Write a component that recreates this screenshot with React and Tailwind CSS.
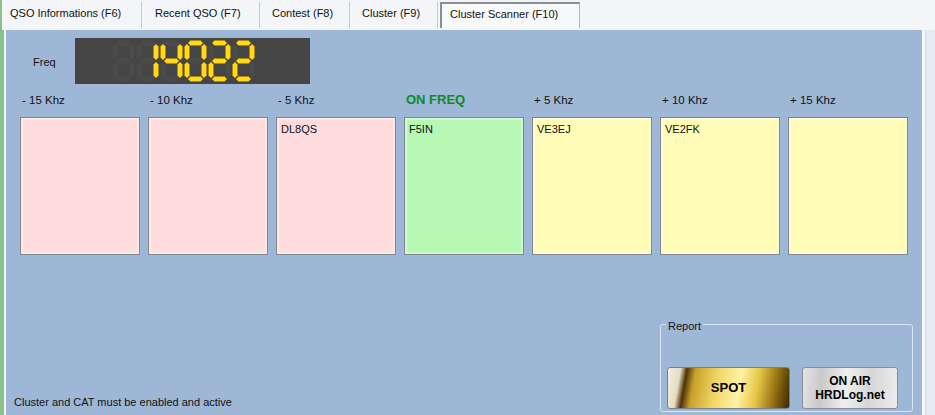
import React from "react";

const SEGS = {
  "0": "abcdef",
  "1": "bc",
  "2": "abged",
  "3": "abgcd",
  "4": "fgbc",
  "5": "afgcd",
  "6": "afgedc",
  "7": "abc",
  "8": "abcdefg",
  "9": "abcdfg",
};

function hseg(x1, x2, cy, t) {
  const h = t / 2;
  return `${x1},${cy} ${x1 + h},${cy - h} ${x2 - h},${cy - h} ${x2},${cy} ${x2 - h},${cy + h} ${x1 + h},${cy + h}`;
}
function vseg(y1, y2, cx, t) {
  const h = t / 2;
  return `${cx},${y1} ${cx + h},${y1 + h} ${cx + h},${y2 - h} ${cx},${y2} ${cx - h},${y2 - h} ${cx - h},${y1 + h}`;
}

function Digit({ d, ghost }) {
  const w = 23;
  const h = 42;
  const t = 5;
  const L = 3;
  const R = w - 3;
  const T = 3;
  const M = h / 2;
  const B = h - 3;
  const geo = {
    a: hseg(L + 1, R - 1, T, t),
    b: vseg(T + 1, M - 1, R, t),
    c: vseg(M + 1, B - 1, R, t),
    d: hseg(L + 1, R - 1, B, t),
    e: vseg(M + 1, B - 1, L, t),
    f: vseg(T + 1, M - 1, L, t),
    g: hseg(L + 1, R - 1, M, t),
  };
  const on = ghost ? "" : SEGS[d] || "";
  return (
    <svg width="24" height="42" viewBox="0 0 24 42" aria-hidden="true">
      {Object.keys(geo).map((k) => (
        <polygon
          key={k}
          points={geo[k]}
          fill={on.includes(k) ? "#ffd81c" : "#4b4b49"}
          stroke={on.includes(k) ? "#b08a00" : "none"}
          strokeWidth="0.8"
        />
      ))}
    </svg>
  );
}

const boxes = [
  { label: "- 15 Khz", call: "", bg: "bg-[#ffdcdc]" },
  { label: "- 10 Khz", call: "", bg: "bg-[#ffdcdc]" },
  { label: "- 5 Khz", call: "DL8QS", bg: "bg-[#ffdcdc]" },
  { label: "ON FREQ", call: "F5IN", bg: "bg-[#b6f8b4]", on: true },
  { label: "+ 5 Khz", call: "VE3EJ", bg: "bg-[#fffcb8]" },
  { label: "+ 10 Khz", call: "VE2FK", bg: "bg-[#fffcb8]" },
  { label: "+ 15 Khz", call: "", bg: "bg-[#fffcb8]" },
];

export default function App() {
  return (
    <div
      className="w-[935px] h-[415px] overflow-hidden bg-[#f3f5f8] flex flex-col text-[11px] text-[#111]"
      style={{ fontFamily: '"Liberation Sans", Arial, sans-serif' }}
    >
      {/* Tabs */}
      <div className="h-[30px] flex items-stretch pt-[2px] pb-[2px] border-l-2 border-[#8cc08c]">
        <div className="w-[140px] pl-[8px] pb-[3px] flex items-center border-r border-[#c5c8cc]">QSO Informations (F6)</div>
        <div className="w-[118px] pl-[13px] pb-[3px] flex items-center border-r border-[#c5c8cc]">Recent QSO (F7)</div>
        <div className="w-[90px] pl-[12px] pb-[3px] flex items-center border-r border-[#c5c8cc]">Contest (F8)</div>
        <div className="w-[88px] pl-[12px] pb-[3px] flex items-center border-r border-[#c5c8cc]">Cluster (F9)</div>
        <div className="w-[140px] ml-[2px] pl-[8px] pb-[3px] flex items-center bg-[#f8f9fa] border-t-2 border-l-2 border-r border-[#8a8d92] border-r-[#b0b3b8]">
          Cluster Scanner (F10)
        </div>
      </div>

      <div className="flex flex-1">
        <div className="w-[4px] bg-[#8cc08c]"></div>
        <div className="w-[2px] bg-[#f3f5f8]"></div>
        {/* Panel */}
        <div className="w-[916px] bg-[#9fb7d7] flex flex-col pl-[14px] pr-[8px] pt-[8px]">
          {/* Freq row */}
          <div className="flex items-center">
            <div className="w-[55px] pl-[13px] pt-[3px]">Freq</div>
            <div
              role="img"
              aria-label="14022"
              className="w-[235px] h-[46px] bg-[#454545] flex items-center pl-[37px]"
            >
              <Digit ghost />
              <Digit d="1" />
              <Digit d="4" />
              <Digit d="0" />
              <Digit d="2" />
              <Digit d="2" />
            </div>
          </div>

          {/* Labels */}
          <div className="flex gap-[8px] mt-[9px] h-[14px]">
            {boxes.map((b) => (
              <div
                key={b.label}
                className={
                  "w-[120px] pl-[2px] leading-[14px] " +
                  (b.on ? "font-bold text-[13px] text-[#0a8a2c]" : "text-[11.5px]")
                }
              >
                {b.label}
              </div>
            ))}
          </div>

          {/* Boxes */}
          <div className="flex gap-[8px] mt-[10px]">
            {boxes.map((b) => (
              <div
                key={b.label}
                className={
                  "w-[120px] h-[138px] border border-[#7d858e] shadow-[inset_0_0_0_2px_rgba(255,255,255,0.35)] px-[4px] pt-[3px] " +
                  b.bg
                }
              >
                {b.call}
              </div>
            ))}
          </div>

          {/* Bottom */}
          <div className="flex flex-1 justify-between items-end">
            <div className="pb-[5px] -ml-[6px]">Cluster and CAT must be enabled and active</div>
            <div className="w-[253px] h-[88px] mb-[3px] mr-[1px] border border-[#dbe6f3] rounded-[3px] relative flex items-end gap-[12px] pl-[6px] pb-[2px]">
              <div className="absolute left-[5px] top-[-7px] px-[2px] bg-[#9fb7d7] text-[11px]">Report</div>
              <div className="w-[123px] h-[42px] rounded-[3px] border border-[#7b7f86] bg-[linear-gradient(100deg,#f1eee6_0%,#e6dcc0_10%,#4e3306_15%,#c9a02a_22%,#f2d766_40%,#fff2a6_58%,#e8c84a_72%,#9a7512_86%,#3a2804_100%)] flex items-center justify-center font-bold text-[13px] text-black">
                SPOT
              </div>
              <div className="w-[96px] h-[42px] rounded-[3px] border border-[#8a8e94] bg-[linear-gradient(95deg,#e4e4e4_0%,#c9c9c9_20%,#efefef_45%,#d6d6d6_70%,#ececec_100%)] flex flex-col items-center justify-center font-bold text-[12px] leading-[14px] text-black">
                <span>ON AIR</span>
                <span>HRDLog.net</span>
              </div>
            </div>
          </div>
        </div>
        <div className="w-[3px] bg-[#f6f8fb]"></div>
        <div className="flex-1 bg-[#e6ecf5] border-l border-[#d4dce8]"></div>
      </div>
    </div>
  );
}
